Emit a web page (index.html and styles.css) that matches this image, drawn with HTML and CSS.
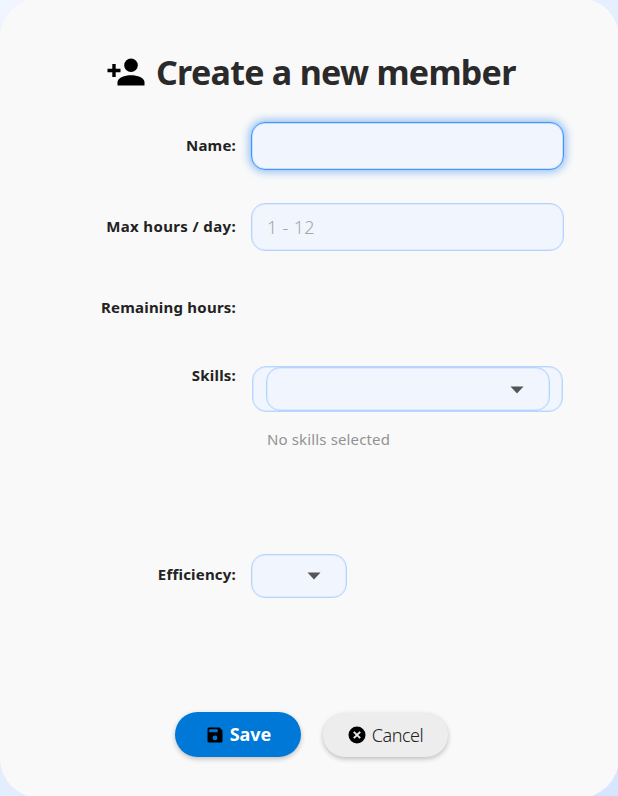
FILE: index.html
```html
<!DOCTYPE html>
<html lang="en">
<head>
<meta charset="utf-8">
<title>Create a new member</title>
<link rel="stylesheet" href="styles.css">
</head>
<body>
<main class="card">
  <h1 class="title">
    <svg class="title-icon" viewBox="0 0 38 28" aria-hidden="true"><path d="M5.300 6h3.400v4.800h4.800v3.400H8.700v4.800H5.300v-4.800H.500v-3.400h4.800z"/><circle cx="24" cy="7.300" r="6.800"/><path d="M10.500 27.500v-3.300c0-4.600 7.200-7 13.500-7s13.500 2.400 13.500 7v3.300z"/></svg>
    <span class="title-text">Create a new member</span>
  </h1>
  <form class="form">
    <div class="row">
      <label class="label name-label" for="name">Name:</label>
      <input class="input focused" id="name" type="text">
    </div>
    <div class="row">
      <label class="label hours-label" for="hours">Max hours / day:</label>
      <input class="input" id="hours" type="text" placeholder="1 - 12">
    </div>
    <div class="row">
      <span class="label remaining-label">Remaining hours:</span>
    </div>
    <div class="row skills-row">
      <span class="label skills-label">Skills:</span>
      <div class="skills">
        <div class="skills-frame">
          <div class="select skills-select"><svg class="arrow" viewBox="0 0 14 8"><path d="M.500.500h13L7 7.500z"/></svg></div>
        </div>
        <p class="hint"><span class="hint-text">No skills selected</span></p>
      </div>
    </div>
    <div class="row efficiency-row">
      <span class="label efficiency-label">Efficiency:</span>
      <div class="select efficiency-select"><svg class="arrow" viewBox="0 0 14 8"><path d="M.500.500h13L7 7.500z"/></svg></div>
    </div>
    <div class="actions">
      <button class="button save" type="button">
        <svg class="save-icon" viewBox="0 0 16 16"><path fill-rule="evenodd" d="M2 .500h10.500l3 3V14a1.500 1.500 0 0 1-1.500 1.500H2A1.500 1.500 0 0 1 .500 14V2A1.500 1.500 0 0 1 2 .500zM2.300 2.300v3h8.400v-3zM8 8.500a2.400 2.400 0 1 0 0 4.800 2.400 2.400 0 0 0 0-4.800z"/></svg>
        <span class="save-text">Save</span>
      </button>
      <button class="button cancel" type="button">
        <svg class="cancel-icon" viewBox="0 0 18 18"><circle cx="9" cy="9" r="8.500"/><path class="cross" d="M5.800 5.800l6.400 6.400M12.200 5.800l-6.400 6.400"/></svg>
        <span class="cancel-text">Cancel</span>
      </button>
    </div>
  </form>
</main>
</body>
</html>
```
FILE: styles.css
```css
* { box-sizing: border-box; }
html { overflow: hidden; }
body {
  margin: 0;
  width: 618px;
  height: 796px;
  overflow: hidden;
  background: linear-gradient(135deg, #f0f5ff 0%, #e4eefe 50%, #d6e6ff 100%);
  font-family: "Noto Sans", "Open Sans", sans-serif;
  color: #222;
}
.card {
  width: 619px;
  height: 800px;
  margin-top: -2px;
  padding: 50px 55px 0 50px;
  border-radius: 40px;
  background: #f9f9f9;
}
.title {
  display: flex;
  align-items: center;
  height: 48px;
  margin: 0 0 26px 57px;
  gap: 11px;
  font-size: 34px;
  font-weight: 700;
  line-height: 48px;
  color: #2a2a2a;
  white-space: nowrap;
}
.title-icon { width: 38px; height: 28px; flex: none; }
.title-text { letter-spacing: -0.72px; }
.form { display: flex; flex-direction: column; gap: 33px; }
.row {
  display: grid;
  grid-template-columns: 186px 313px;
  column-gap: 15px;
  align-items: center;
  height: 48px;
}
.label {
  justify-self: end;
  padding-bottom: 2px;
  font-size: 15px;
  font-weight: 700;
  line-height: 20px;
  white-space: nowrap;
}
.name-label { letter-spacing: 0.2px; }
.hours-label { letter-spacing: 0.36px; }
.remaining-label { letter-spacing: 0.22px; }
.skills-label { letter-spacing: 0.2px; }
.efficiency-label { padding-bottom: 4px; letter-spacing: 0.2px; }
.input {
  width: 313px;
  height: 48px;
  padding: 0 15px;
  border: 1px solid #b3d4ff;
  border-radius: 14px;
  outline: none;
  background: #f0f5fe;
  box-shadow: inset 0 0 0 1px #deebff;
  font: 300 18px/24px "Noto Sans", "Open Sans", sans-serif;
}
.input::placeholder { color: #a6a6a6; opacity: 1; letter-spacing: 0.3px; }
.focused {
  border-color: #4096ff;
  box-shadow: 0 0 8px 2px #90bdf2, inset 0 0 0 1px #c7deff;
}
.skills-row { align-items: start; height: 156px; }
.skills { padding: 1px 1px 0; }
.skills-frame {
  height: 46px;
  padding: 0 12px 0 13px;
  border: 1px solid #b8d6ff;
  border-radius: 14px;
  background: #f0f5fe;
  box-shadow: inset 0 0 0 1px #d8e8ff;
}
.select {
  display: flex;
  align-items: center;
  justify-content: flex-end;
  height: 44px;
  padding-right: 25px;
  border: 1px solid #b3d4ff;
  border-radius: 14px;
  background: #f0f5fe;
  box-shadow: inset 0 0 0 1px #deebff;
}
.skills-select { width: 284px; padding-top: 1px; }
.arrow { width: 14px; height: 8px; fill: #555; }
.hint { margin: 16px 0 0 15px; font-size: 15px; line-height: 22px; color: #929292; }
.hint-text { letter-spacing: 0.14px; }
.efficiency-row { height: 44px; }
.efficiency-select { width: 96px; }
.actions { display: flex; align-items: flex-start; gap: 22px; margin: 81px 0 0 125px; }
.button {
  display: flex;
  align-items: center;
  justify-content: center;
  padding: 0 0 1px;
  border: 0;
  border-radius: 23px;
  font: 18px/24px "Noto Sans", "Open Sans", sans-serif;
}
.save { width: 126px; height: 45px; padding-left: 2px; gap: 7px; background: #0078d7; color: #fff; font-weight: 700; box-shadow: 0 2px 5px #0000003d; }
.cancel { width: 125px; height: 44px; margin-top: 1px; gap: 6px; background: #ededed; color: #333; box-shadow: 0 2px 5px #0000003d; }
.save-icon { width: 16px; height: 16px; margin-top: 1px; }
.cancel-icon { width: 18px; height: 18px; margin-top: 1px; }
.cancel-text { font-weight: 300; color: #222; letter-spacing: -0.5px; }
.cross { fill: none; stroke: #ededed; stroke-width: 1.900; }
```
